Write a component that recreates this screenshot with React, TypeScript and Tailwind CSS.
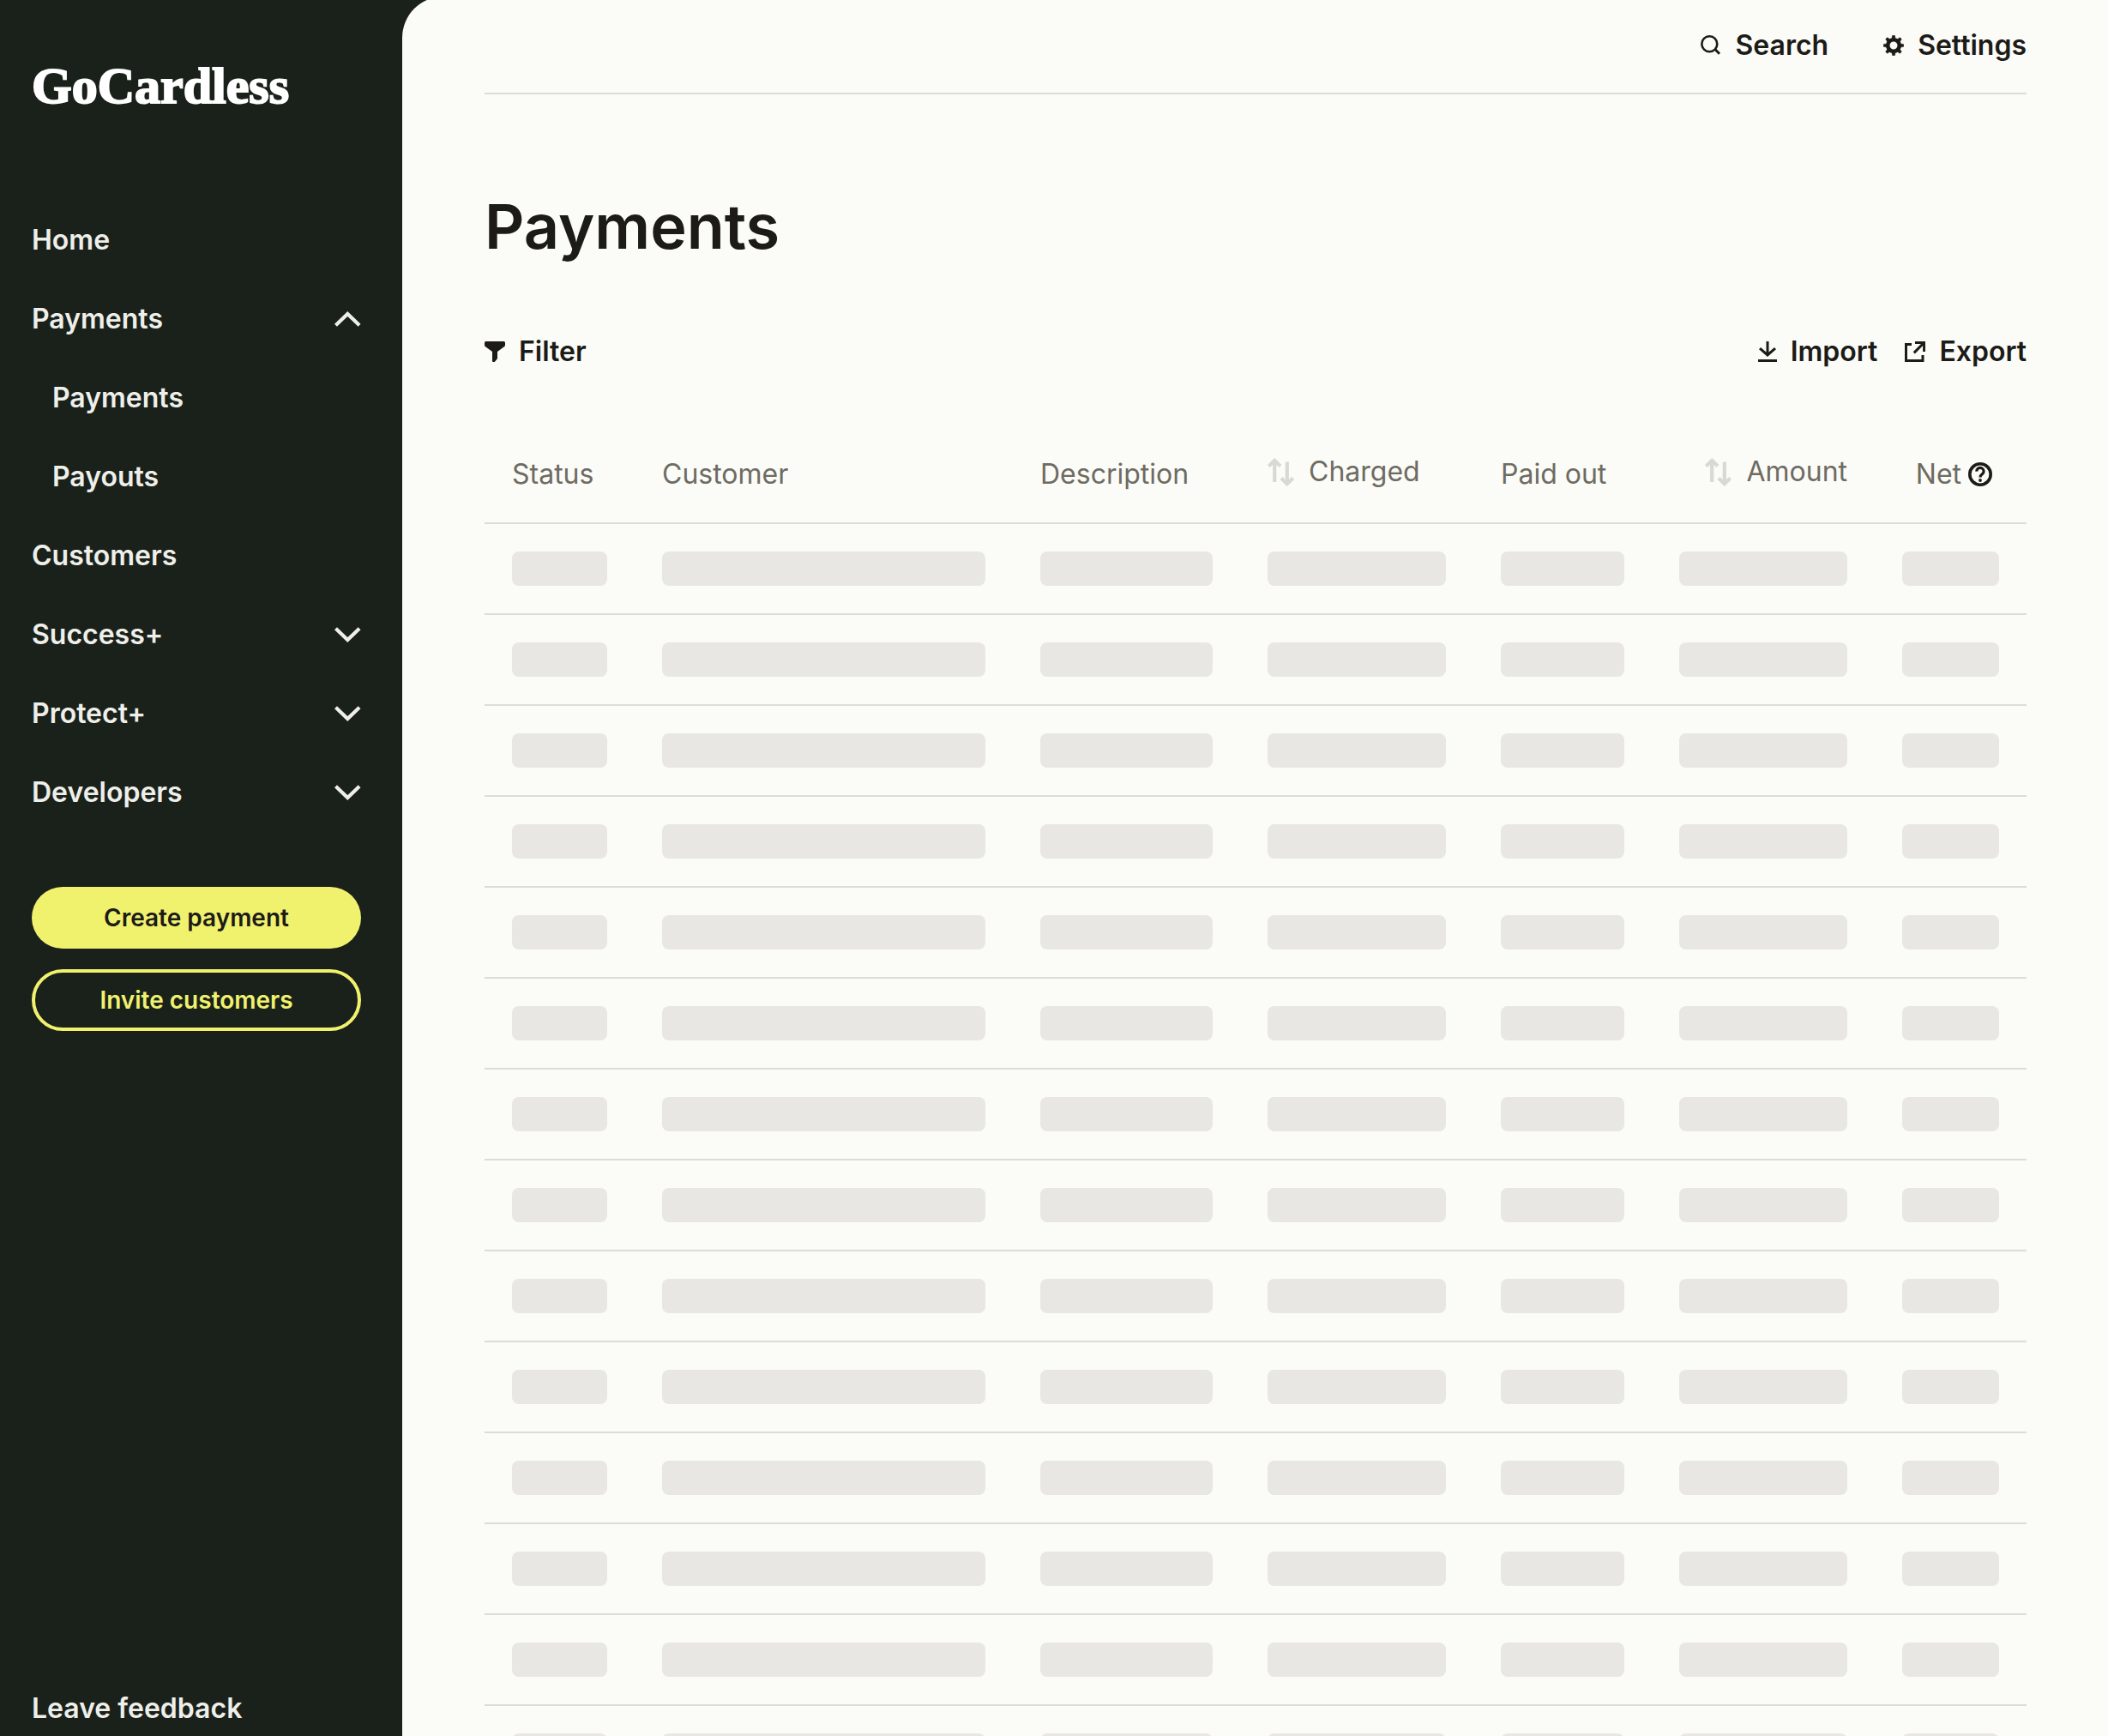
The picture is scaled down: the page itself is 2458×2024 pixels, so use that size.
import React from 'react';

interface NavItem {
  label: string;
  state?: 'open' | 'closed';
  children?: string[];
}

interface Column {
  label: string;
  width: string;
  align?: 'right';
  sortable?: boolean;
  help?: boolean;
}

const NAV_ITEMS: NavItem[] = [
  { label: 'Home' },
  { label: 'Payments', state: 'open', children: ['Payments', 'Payouts'] },
  { label: 'Customers' },
  { label: 'Success+', state: 'closed' },
  { label: 'Protect+', state: 'closed' },
  { label: 'Developers', state: 'closed' },
];

const COLUMNS: Column[] = [
  { label: 'Status', width: 'w-[175px]' },
  { label: 'Customer', width: 'w-auto' },
  { label: 'Description', width: 'w-[265px]' },
  { label: 'Charged', width: 'w-[272px]', sortable: true },
  { label: 'Paid out', width: 'w-[208px]' },
  { label: 'Amount', width: 'w-[260px]', align: 'right', sortable: true },
  { label: 'Net', width: 'w-[177px]', align: 'right', help: true },
];

const SKELETON_ROWS = 14;

const ChevronIcon: React.FC<{ up?: boolean }> = ({ up }) => (
  <svg className="h-[18px] w-[31px]" viewBox="0 0 31 18" fill="none" stroke="currentColor" strokeWidth="4.2" aria-hidden="true">
    <path d={up ? 'M1.5 16.3 15.3 3l13.8 13.3' : 'M1.5 1.7 15.3 15 29.1 1.7'} />
  </svg>
);

const SearchIcon = () => (
  <svg className="size-6" viewBox="0 0 24 24" fill="none" stroke="currentColor" strokeWidth="2.6" aria-hidden="true">
    <circle cx="10.3" cy="10.3" r="9" />
    <path d="m16.6 16.2 5.4 5.6" strokeWidth="3" />
  </svg>
);

const GearIcon = () => (
  <svg className="size-6" viewBox="0 0 24 24" fill="none" stroke="currentColor" aria-hidden="true">
    <circle cx="12" cy="12" r="6.8" strokeWidth="4.6" />
    {[0, 45, 90, 135, 180, 225, 270, 315].map((angle) => (
      <path key={angle} d="M9.9 4.5 10.4.8q.1-.6.7-.6h1.8q.6 0 .7.6l.5 3.7z" fill="currentColor" strokeWidth=".4" transform={`rotate(${angle} 12 12)`} />
    ))}
  </svg>
);

const FilterIcon = () => (
  <svg className="size-6" viewBox="0 0 24 24" fill="currentColor" aria-hidden="true">
    <path d="M1.5 0h21A1.5 1.5 0 0 1 24 1.5v2.7q0 1-.8 1.7L15 12v8l-2.8 3.5q-.4.5-1 .5H10q-1 0-1-1V12L.8 5.9Q0 5.2 0 4.2V1.5A1.5 1.5 0 0 1 1.5 0z" />
  </svg>
);

const ImportIcon = () => (
  <svg className="h-6 w-[22px]" viewBox="0 0 22 24" fill="none" stroke="currentColor" strokeWidth="3" aria-hidden="true">
    <path d="M11 0v16M2 8.2l9 7.8 9-7.8M0 22.5h22" />
  </svg>
);

const ExportIcon = () => (
  <svg className="size-6" viewBox="0 0 24 24" fill="none" stroke="currentColor" strokeWidth="3" aria-hidden="true">
    <path d="M8 3.5H1.5v19H21V16M12 1.4h10.6V12M22 2 10.8 13.4" />
  </svg>
);

const SortIcon = () => (
  <svg className="h-[33px] w-8 text-[#d8d9d4]" viewBox="0 0 32 33" fill="none" stroke="currentColor" strokeWidth="4.2" aria-hidden="true">
    <path d="M8.2 28V2.8M1.4 9.6l6.8-6.8 6.8 6.8M22.8 4.5v26M16 23.6l6.8 6.6 6.8-6.6" />
  </svg>
);

const HelpIcon = () => (
  <svg className="size-7" viewBox="0 0 28 28" fill="none" stroke="currentColor" aria-hidden="true">
    <circle cx="14" cy="14" r="12.2" strokeWidth="3.6" />
    <path d="M9.9 10.6a4.1 4.1 0 1 1 6.3 3.3C14.6 15 14 15.6 14 17.6" strokeWidth="3.2" />
    <circle cx="14" cy="21" r="1.9" fill="currentColor" stroke="none" />
  </svg>
);

const Sidebar = () => (
  <aside className="flex w-[469px] shrink-0 flex-col pr-12 pl-[37px] text-[#efefea]">
    <a href="#" className="mt-16 font-['Liberation_Serif',serif] text-[60px] leading-[72px] font-bold text-white [-webkit-text-stroke:2px_#fff]">
      GoCardless
    </a>

    <nav className="mt-[98px] text-[32px] leading-10 font-semibold">
      <ul>
        {NAV_ITEMS.map((item) => (
          <li key={item.label}>
            {item.state ? (
              <button type="button" aria-expanded={item.state === 'open'} className="flex h-[92px] w-full items-center justify-between text-left">
                {item.label}
                <ChevronIcon up={item.state === 'open'} />
              </button>
            ) : (
              <a href="#" className="flex h-[92px] items-center">{item.label}</a>
            )}
            {item.children && (
              <ul className="pl-6">
                {item.children.map((child) => (
                  <li key={child}>
                    <a href="#" className="flex h-[92px] items-center">{child}</a>
                  </li>
                ))}
              </ul>
            )}
          </li>
        ))}
      </ul>
    </nav>

    <div className="mt-16 flex flex-col gap-6 text-[28px] leading-10 font-semibold">
      <button type="button" className="h-[72px] rounded-full bg-[#f0f26e] text-[#1c1b17]">Create payment</button>
      <button type="button" className="h-[72px] rounded-full border-4 border-[#f0f26e] text-[#f0f26e]">Invite customers</button>
    </div>

    <a href="#" className="mt-auto mb-3 text-[32px] leading-10 font-semibold">Leave feedback</a>
  </aside>
);

const PaymentsTable = () => (
  <table className="mt-[99px] w-full table-fixed border-collapse">
    <colgroup>
      {COLUMNS.map((column) => (
        <col key={column.label} className={column.width} />
      ))}
    </colgroup>
    <thead>
      <tr className="border-b-2 border-[#dcddd8] text-[32px] leading-[48px] text-[#6e6b62]">
        {COLUMNS.map((column) => (
          <th key={column.label} scope="col" className={`px-8 pb-8 align-top font-normal whitespace-nowrap ${column.align === 'right' ? 'text-right' : 'text-left'}`}>
            {column.sortable ? (
              <button type="button" className="inline-flex items-center gap-4 align-top leading-[42px]">
                <SortIcon />
                {column.label}
              </button>
            ) : column.help ? (
              <span className="inline-flex items-center gap-2 pr-2 align-top">
                {column.label}
                <button type="button" aria-label="About net amounts" className="text-[#1c1b17]">
                  <HelpIcon />
                </button>
              </span>
            ) : (
              column.label
            )}
          </th>
        ))}
      </tr>
    </thead>
    <tbody>
      {Array.from({ length: SKELETON_ROWS }, (_, row) => (
        <tr key={row} className="border-b-2 border-[#dcddd8]">
          {COLUMNS.map((column) => (
            <td key={column.label} className="px-8 py-8">
              <div className="h-10 rounded-lg bg-[#e8e7e3]"></div>
            </td>
          ))}
        </tr>
      ))}
    </tbody>
  </table>
);

const App: React.FC = () => {
  return (
    <div className="flex h-screen overflow-hidden bg-[#1a211b] font-['Inter',sans-serif]">
      <Sidebar />
      <main className="-mt-1 min-w-0 flex-1 overflow-hidden rounded-tl-[48px] bg-[#fbfbf7] pr-[95px] pl-24 text-[#1c1b17]">
        <header className="flex h-[114px] items-center justify-end gap-16 border-b-2 border-[#dcddd8] pt-0.5 text-[32px] leading-10 font-semibold">
          <button type="button" className="flex items-center gap-4">
            <SearchIcon />
            Search
          </button>
          <button type="button" className="flex items-center gap-4">
            <GearIcon />
            Settings
          </button>
        </header>

        <h1 className="mt-[110px] text-[72px] leading-[88px] font-semibold">Payments</h1>

        <div className="mt-[82px] flex items-center justify-between text-[32px] leading-10 font-semibold">
          <button type="button" className="flex items-center gap-4">
            <FilterIcon />
            Filter
          </button>
          <div className="flex gap-8">
            <button type="button" className="flex items-center gap-4">
              <ImportIcon />
              Import
            </button>
            <button type="button" className="flex items-center gap-4">
              <ExportIcon />
              Export
            </button>
          </div>
        </div>

        <PaymentsTable />
      </main>
    </div>
  );
};

export default App;
